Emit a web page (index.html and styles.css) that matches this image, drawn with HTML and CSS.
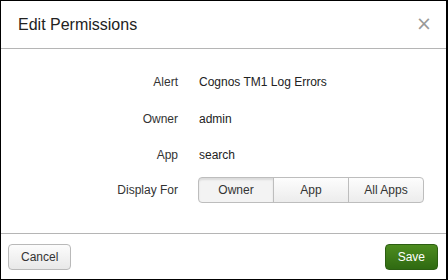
FILE: index.html
```html
<!DOCTYPE html>
<html lang="en">
<head>
  <meta charset="UTF-8" />
  <title>Edit Permissions</title>
  <link rel="stylesheet" href="styles.css">
</head>
<body>
  <div class="modal">
    <div class="modal-header">
      <h3 class="modal-title">Edit Permissions</h3>
      <button class="close">&times;</button>
    </div>
    <div class="modal-body">
      <div class="row">
        <div class="label">Alert</div>
        <div class="value">Cognos TM1 Log Errors</div>
      </div>
      <div class="row">
        <div class="label">Owner</div>
        <div class="value">admin</div>
      </div>
      <div class="row">
        <div class="label">App</div>
        <div class="value">search</div>
      </div>
      <div class="row row-group">
        <div class="label">Display For</div>
        <div class="btn-group">
          <button class="seg active">Owner</button>
          <button class="seg">App</button>
          <button class="seg">All Apps</button>
        </div>
      </div>
    </div>
    <div class="modal-footer">
      <button class="btn">Cancel</button>
      <button class="btn btn-primary">Save</button>
    </div>
  </div>
</body>
</html>
```

FILE: styles.css
```css
* {
  box-sizing: border-box;
}

body {
  margin: 0;
  font-family: "Liberation Sans", Arial, sans-serif;
  color: #333;
  background: #fff;
}

.modal {
  width: 448px;
  height: 280px;
  border: 1px solid #000;
  border-right-width: 2px;
  display: flex;
  flex-direction: column;
  background: #fff;
}

.modal-header {
  height: 48px;
  border-bottom: 1px solid #b5b5b5;
  display: flex;
  align-items: center;
  justify-content: space-between;
  padding: 0 14px 0 17px;
}

.modal-title {
  margin: 0;
  font-size: 16px;
  font-weight: normal;
  color: #222;
}

.close {
  border: none;
  background: none;
  font-size: 19px;
  color: #999;
  padding: 0;
  margin-top: -3px;
  font-family: "DejaVu Sans", sans-serif;
  line-height: 1;
  cursor: pointer;
}

.modal-body {
  flex: 1;
  padding-top: 15px;
}

.row {
  display: flex;
  align-items: center;
  height: 36.5px;
  font-size: 12px;
}

.label {
  width: 177px;
  text-align: right;
  color: #333;
}

.value {
  margin-left: 21px;
  color: #222;
}

.row-group {
  height: 28px;
  margin-top: 2px;
}

.btn-group {
  margin-left: 20px;
  display: flex;
}

.seg {
  width: 76px;
  height: 26px;
  font-family: inherit;
  font-size: 12px;
  color: #333;
  background: linear-gradient(#fdfdfd, #ececec);
  border: 1px solid #bdbdbd;
  margin-left: -1px;
  padding: 0;
}

.seg:first-child {
  margin-left: 0;
  border-radius: 4px 0 0 4px;
}

.seg:last-child {
  border-radius: 0 4px 4px 0;
}

.seg.active {
  background: #f3f3f3;
  box-shadow: inset 0 2px 2px rgba(0, 0, 0, 0.1);
}

.modal-footer {
  height: 46px;
  border-top: 1px solid #b5b5b5;
  display: flex;
  align-items: center;
  justify-content: space-between;
  padding: 0 8px 0 7px;
}

.btn {
  height: 26px;
  padding: 0 12px;
  font-family: inherit;
  font-size: 12px;
  color: #333;
  background: linear-gradient(#fcfcfc, #e8e8e8);
  border: 1px solid #b9b9b9;
  border-radius: 4px;
  min-width: 61px;
}

.btn-primary {
  min-width: 52px;
  color: #fff;
  background: linear-gradient(#4d8c1f, #2f6a12);
  border-color: #2c5e12;
}
```
